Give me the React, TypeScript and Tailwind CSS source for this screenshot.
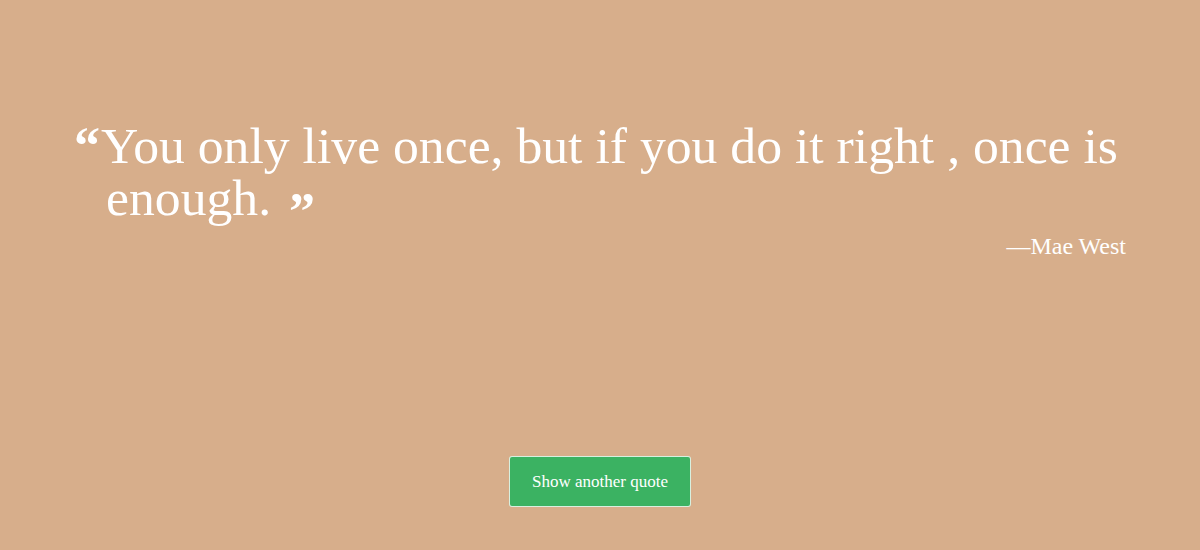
export default function App() {
  return (
    <div
      className="w-[1200px] h-[550px] bg-[#d7ae8b] text-white flex flex-col items-center"
      style={{ fontFamily: '"Liberation Serif", "Times New Roman", serif' }}
    >
      <div className="w-[1052px] pt-[120px]">
        <blockquote className="text-[51.7px] leading-[52px] pl-[32px] -indent-[32px]">
          <span className="font-bold text-[52px] align-top inline-block indent-0 mr-[1px]">“</span>You only live once, but if you do it right , once is enough.{" "}
          <span className="font-bold text-[52px] inline-block indent-0 ml-[5px] relative top-[14px]">”</span>
        </blockquote>
        <div className="text-right text-[24px] mt-[4px]">—Mae West</div>
      </div>
      <div className="flex-1" />
      <button className="mb-[43px] bg-[#3bb262] border border-white/80 rounded-[3px] px-[22px] h-[51px] text-[17px] text-white">
        Show another quote
      </button>
    </div>
  );
}
